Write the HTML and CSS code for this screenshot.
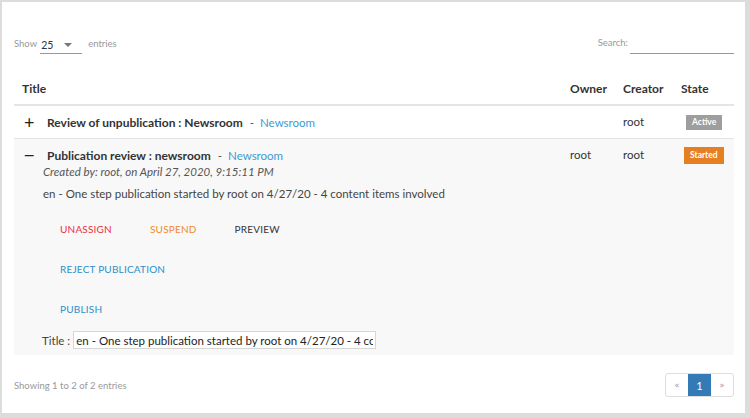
FILE: index.html
```html
<!DOCTYPE html>
<html>
<head>
<meta charset="utf-8">
<link rel="stylesheet" href="styles.css">
</head>
<body>
<div class="card">
  <div class="toolbar">
    <div class="length">
      <span>Show</span>
      <span class="select"><span class="val">25</span><span class="caret"></span></span>
      <span>entries</span>
    </div>
    <div class="search">
      <span>Search:</span>
      <span class="search-input"></span>
    </div>
  </div>
  <table class="grid">
    <thead>
      <tr>
        <th class="c-title">Title</th>
        <th class="c-owner">Owner</th>
        <th class="c-creator">Creator</th>
        <th class="c-state">State</th>
      </tr>
    </thead>
    <tbody>
      <tr class="row">
        <td class="c-title">
          <div class="title-line"><span class="toggle">+</span><b>Review of unpublication : Newsroom</b><span class="dash">-</span><a class="link">Newsroom</a></div>
        </td>
        <td class="c-owner"></td>
        <td class="c-creator"><div class="cell">root</div></td>
        <td class="c-state"><div class="cell"><span class="badge active">Active</span></div></td>
      </tr>
      <tr class="row open">
        <td class="c-title">
          <div class="title-line"><span class="toggle minus">—</span><b>Publication review : newsroom</b><span class="dash">-</span><a class="link">Newsroom</a></div>
          <div class="details">
            <div class="created">Created by: root, on April 27, 2020, 9:15:11 PM</div>
            <div class="desc">en - One step publication started by root on 4/27/20 - 4 content items involved</div>
            <div class="actions">
              <div class="btn-row"><span class="btn red">UNASSIGN</span><span class="btn orange">SUSPEND</span><span class="btn dark">PREVIEW</span></div>
              <div class="btn-row"><span class="btn blue">REJECT PUBLICATION</span></div>
              <div class="btn-row"><span class="btn blue">PUBLISH</span></div>
            </div>
            <div class="title-field"><label>Title :</label><input class="tinput" type="text" readonly value="en - One step publication started by root on 4/27/20 - 4 content items involved"></div>
          </div>
        </td>
        <td class="c-owner"><div class="cell">root</div></td>
        <td class="c-creator"><div class="cell">root</div></td>
        <td class="c-state"><div class="cell"><span class="badge started">Started</span></div></td>
      </tr>
    </tbody>
  </table>
  <div class="footer">
    <div class="info">Showing 1 to 2 of 2 entries</div>
    <div class="pager">
      <span class="pg">«</span><span class="pg cur">1</span><span class="pg">»</span>
    </div>
  </div>
</div>
</body>
</html>
```
FILE: styles.css
```css
html, body { margin: 0; padding: 0; }
body {
  width: 750px;
  height: 418px;
  background: #dcdcdc;
  font-family: Lato, "Noto Sans", sans-serif;
  color: #333;
  overflow: hidden;
}
.card {
  box-sizing: border-box;
  width: 743px;
  height: 411px;
  margin: 2px 0 0 2px;
  background: #fff;
  padding: 27px 11px 0 12px;
}
.toolbar {
  display: flex;
  justify-content: space-between;
  align-items: flex-end;
  height: 25px;
  font-size: 9.5px;
  color: #999;
}
.length { display: flex; align-items: flex-end; gap: 3px; }
.length > span:first-child, .length > span:last-child { padding-bottom: 5px; }
.select {
  display: flex;
  align-items: center;
  width: 42px;
  border-bottom: 1px solid #999;
  height: 16px;
  color: #333;
  font-size: 10.5px;
  margin-right: 3px;
}
.select .val { flex: 0 0 auto; padding-left: 1px; }
.caret {
  margin-left: 11px;
  width: 0; height: 0;
  border-left: 4px solid transparent;
  border-right: 4px solid transparent;
  border-top: 4px solid #777;
}
.search { display: flex; align-items: flex-end; gap: 2px; }
.search > span:first-child { padding-bottom: 6px; }
.search-input { width: 104px; border-bottom: 1px solid #999; height: 16px; }

.grid {
  width: 720px;
  border-collapse: collapse;
  margin-top: 18px;
  font-size: 11.5px;
}
.grid th {
  text-align: left;
  font-weight: 700;
  font-size: 12px;
  color: #333;
  height: 32px;
  padding: 0;
  border-bottom: 2px solid #e4e4e4;
  vertical-align: middle;
}
.grid td {
  padding: 0;
  vertical-align: top;
  border-bottom: 1px solid #e4e4e4;
}
.c-title { padding-left: 8px !important; }
.c-owner { width: 53px; }
.c-creator { width: 58px; }
.c-state { width: 53px; }
.row td { padding-top: 8px; padding-bottom: 8px; }
.row.open td { background: #f8f8f8; border-bottom: none; padding-bottom: 6px; }
.cell { height: 16px; line-height: 16px; display: flex; align-items: center; }
.title-line { display: flex; align-items: center; height: 16px; white-space: nowrap; }
.toggle {
  width: 25px;
  font-size: 18px;
  font-weight: 400;
  line-height: 16px;
  color: #222;
  padding-left: 2px;
  box-sizing: border-box;
}
.toggle.minus { font-size: 13px; font-weight: 700; }
.title-line b { font-weight: 700; color: #333; font-size: 12px; }
.dash { margin: 0 6px 0 7px; color: #555; }
.link { color: #3d9bd1; }
.badge {
  display: inline-block;
  color: #fff;
  font-size: 8.5px;
  font-weight: 700;
  padding: 0 6px;
  line-height: 15px;
}
.badge.active { background: #9e9e9e; margin-left: 5px; }
.badge.started { background: #e67e22; margin-left: 3px; line-height: 17px; padding: 0 6px; }

.details { margin-left: 21px; }
.created { font-style: italic; color: #555; height: 18px; line-height: 18px; }
.desc { color: #444; height: 26px; line-height: 26px; }
.actions { padding-left: 17px; margin-top: 16px; }
.btn-row { display: flex; height: 40px; align-items: flex-start; }
.btn { font-size: 10px; letter-spacing: 0.2px; line-height: 12px; margin-right: 38px; }
.btn.red { color: #e8303f; }
.btn.orange { color: #f08a2c; margin-right: 38px; }
.btn.dark { color: #333; }
.btn.blue { color: #2d8ec9; }
.title-field { display: flex; align-items: center; margin-top: -12px; height: 18px; margin-left: -1px; }
.title-field label { color: #444; margin-right: 3px; }
.tinput {
  box-sizing: border-box;
  width: 303px;
  height: 18px;
  border: 1px solid #d6d6d6;
  background: #fff;
  color: #222;
  font-family: Lato, "Noto Sans", sans-serif;
  font-size: 11.5px;
  padding: 0 2px;
  margin: 0;
  outline: none;
}

.footer {
  display: flex;
  justify-content: space-between;
  align-items: center;
  width: 720px;
  margin-top: 18px;
  height: 24px;
}
.info { font-size: 9.5px; color: #999; }
.pager { display: flex; border: 1px solid #ddd; border-radius: 3px; height: 24px; box-sizing: border-box; }
.pg { width: 22px; display: flex; align-items: center; justify-content: center; font-size: 8px; color: #999; font-family: "DejaVu Sans", sans-serif; }
.pg.cur { background: #337ab7; color: #fff; width: 23px; font-size: 11px; font-family: Lato, sans-serif; }
```
